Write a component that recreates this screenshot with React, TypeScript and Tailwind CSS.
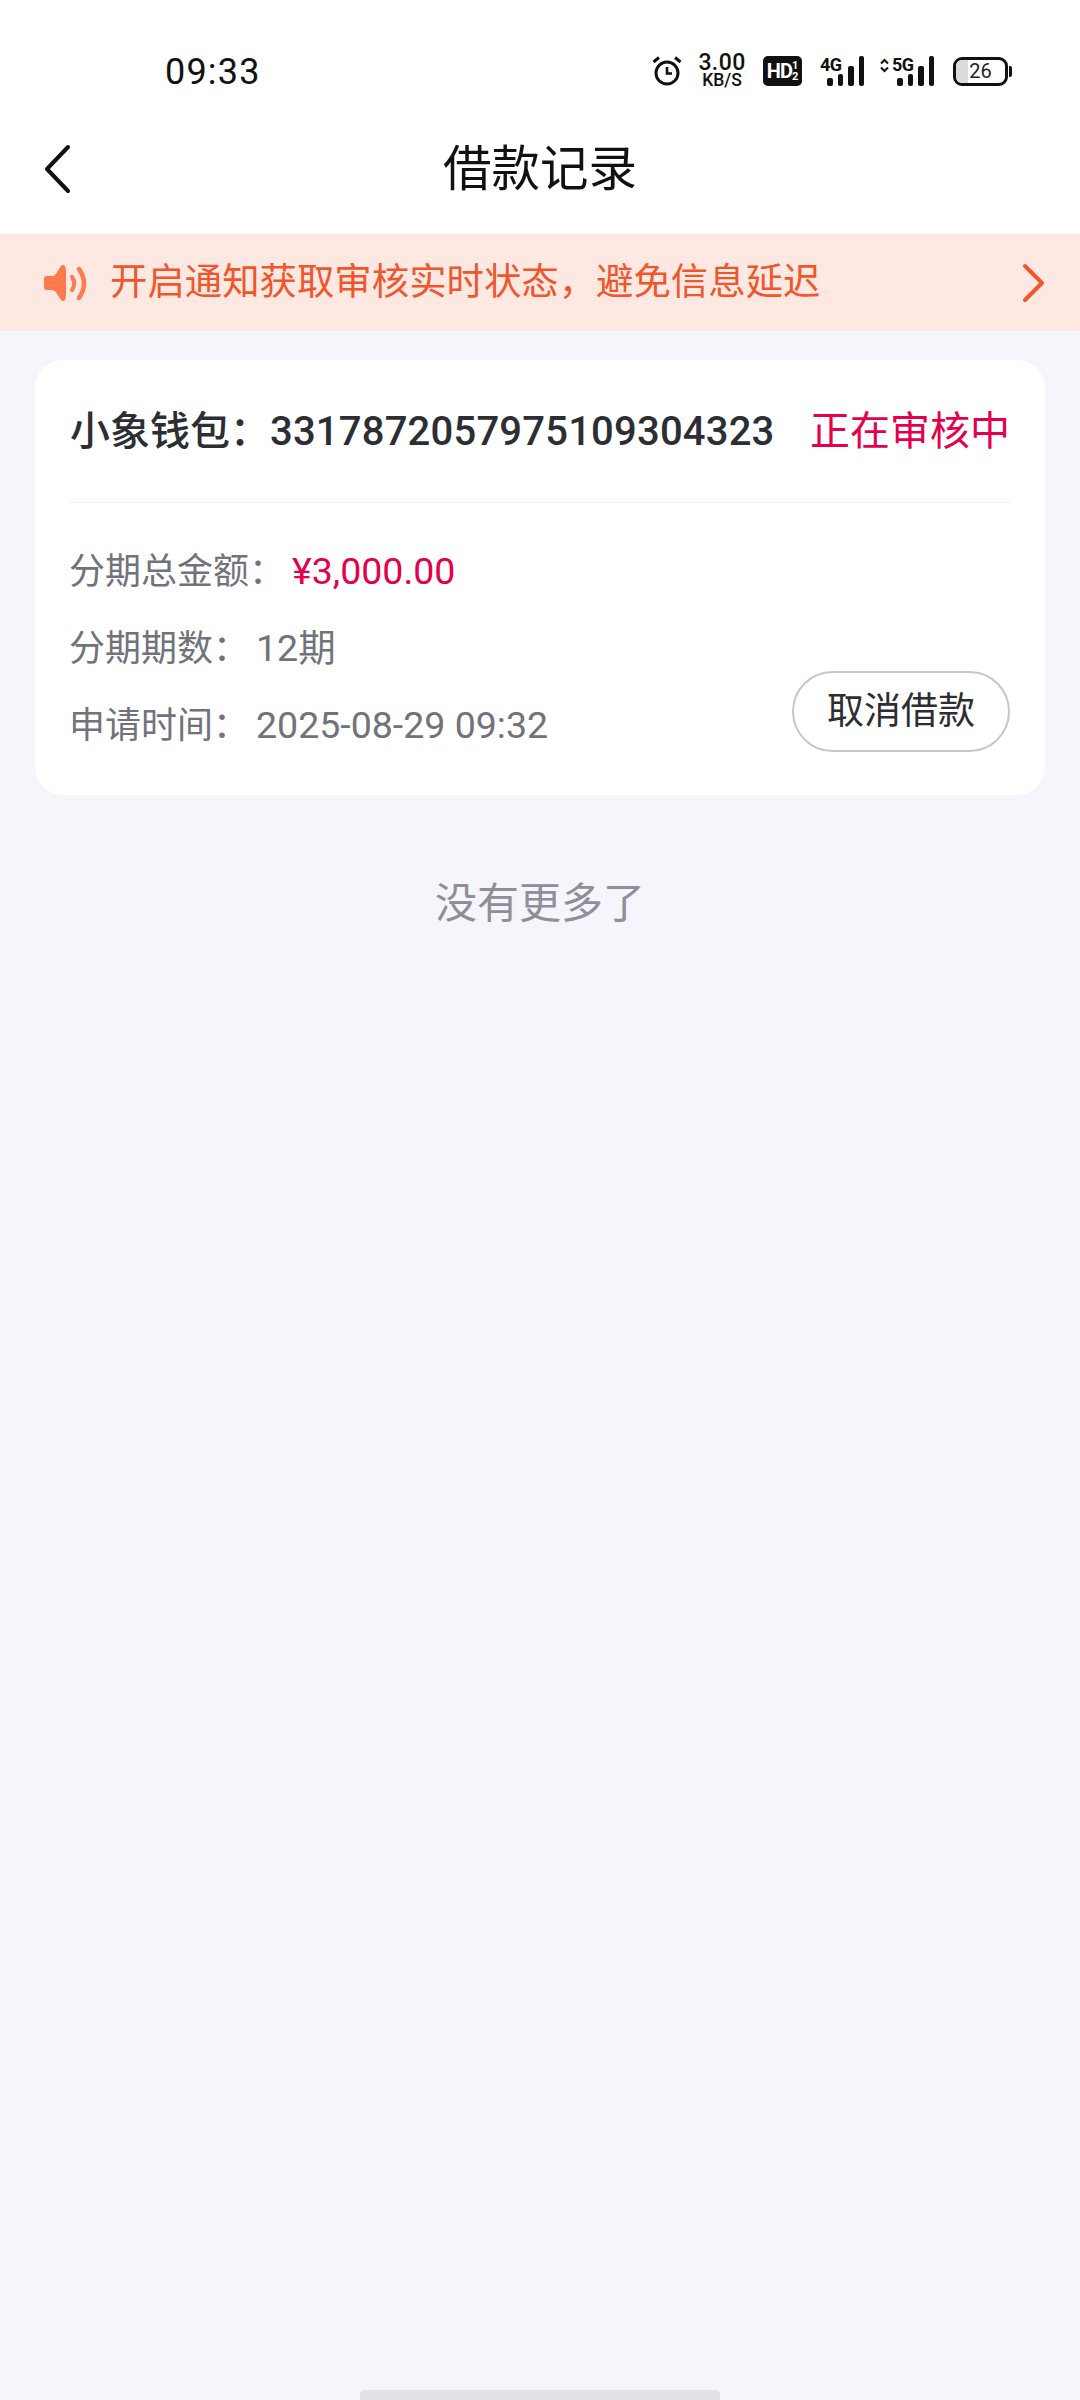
const sans = 'font-["Roboto","Noto_Sans_CJK_SC",sans-serif]';

function Signal({ label, arrows }: { label: string; arrows?: boolean }) {
  return (
    <div className={arrows ? "relative h-[30px] w-[54px]" : "relative h-[30px] w-[44px]"}>
      <div className="absolute left-0 top-0 flex items-center leading-none">
        {arrows && (
          <svg width="9" height="15" viewBox="0 0 9 15" className="mr-[3px]">
            <path d="M1 5.5 L4.5 2 L8 5.5 M1 9.5 L4.5 13 L8 9.5" fill="none" stroke="#111" strokeWidth="2" />
          </svg>
        )}
        <span className="text-[18px] font-bold tracking-[-0.5px] text-[#111]">{label}</span>
      </div>
      <div className="absolute bottom-0 right-0 flex items-end gap-[5px]">
        <i className="block h-[8px] w-[5.5px] rounded-[2px] bg-[#111]" />
        <i className="block h-[12px] w-[5.5px] rounded-[2px] bg-[#111]" />
        <i className="block h-[20px] w-[5.5px] rounded-[2px] bg-[#111]" />
        <i className="block h-[30px] w-[5.5px] rounded-[2px] bg-[#111]" />
      </div>
    </div>
  );
}

function StatusBar() {
  return (
    <div className="flex h-[108px] items-center pl-[165px] pr-[68px] pt-[34px]">
      <span className="relative top-[1px] text-[36px] leading-[42px] tracking-[1.2px] text-[#111]">09:33</span>
      <div className="ml-auto flex items-center">
        <svg width="30" height="30" viewBox="0 0 30 30" className="mr-[14px]">
          <circle cx="15" cy="17" r="11" fill="none" stroke="#111" strokeWidth="3" />
          <path d="M15 11 V17.5 H20" fill="none" stroke="#111" strokeWidth="2.6" />
          <path d="M1.5 6 L7 1.5 M28.5 6 L23 1.5" fill="none" stroke="#111" strokeWidth="3" />
        </svg>
        <div className="mr-[15px] flex w-[52px] flex-col items-center text-[#111]">
          <span className="h-[19px] text-[23px] font-medium leading-[19px] tracking-[0.4px]">3.00</span>
          <span className="h-[17px] text-[17.5px] font-medium leading-[17px]">KB/S</span>
        </div>
        <div className="mr-[18px] flex h-[30px] w-[39px] items-center justify-center rounded-[5px] bg-[#111] text-white">
          <span className="text-[20px] font-bold leading-none tracking-[-1px]">HD</span>
          <span className="flex flex-col text-[11px] font-bold leading-[11px]">
            <span>1</span>
            <span>2</span>
          </span>
        </div>
        <div className="mr-[16px]">
          <Signal label="4G" />
        </div>
        <div className="mr-[19px]">
          <Signal label="5G" arrows />
        </div>
        <div className="relative flex h-[29px] w-[55px] items-center justify-center overflow-hidden rounded-[9px] border-[3px] border-[#111]">
          <div className="absolute bottom-0 left-0 top-0 w-[12px] bg-[#dcdcdc]" />
          <span className="relative text-[20px] leading-none text-[#222]">26</span>
        </div>
        <div className="ml-[1px] h-[11px] w-[3px] rounded-r-[2px] bg-[#111]" />
      </div>
    </div>
  );
}

function Row({ label, children }: { label: string; children: React.ReactNode }) {
  return (
    <div className="flex h-[77px] items-center text-[36px] leading-none text-[#71727b]">
      <span className="ml-[-1px]">{label}</span>
      {children}
    </div>
  );
}

export default function App() {
  return (
    <div className={`flex min-h-[2400px] w-[1080px] flex-col bg-[#f5f5fb] ${sans}`}>
      <div className="bg-white">
        <StatusBar />
        <div className="relative flex h-[126px] items-center justify-center pb-[2px]">
          <svg width="30" height="50" viewBox="0 0 30 50" className="absolute left-[43px] top-[36px]">
            <path d="M25 3 L4 25 L25 47" fill="none" stroke="#111" strokeWidth="4" strokeLinecap="round" strokeLinejoin="round" />
          </svg>
          <span className="text-[48.5px] leading-none text-[#111]">借款记录</span>
        </div>
      </div>

      <div className="flex h-[97px] items-center bg-[#fde8e2] pl-[43px] pr-[34px]">
        <svg width="46" height="40" viewBox="0 0 46 40" className="mr-[21px] shrink-0">
          <path d="M4 13 H9 Q11 13 12.5 11.5 L18 3 Q20 1 22 3 Q23 5 23 8 V32 Q23 35 22 37 Q20 39 18 37 L12.5 28.5 Q11 27 9 27 H4 Q1 27 1 24 V16 Q1 13 4 13 Z" fill="#ff7a4d" />
          <path d="M29 14 Q33.5 20.5 29 27" fill="none" stroke="#ff7a4d" strokeWidth="4" strokeLinecap="round" />
          <path d="M36 6 Q46 20.5 36 35" fill="none" stroke="#ff7a4d" strokeWidth="4.5" strokeLinecap="round" />
        </svg>
        <span className="text-[37.4px] leading-none text-[#f0562c]">开启通知获取审核实时状态，避免信息延迟</span>
        <svg width="24" height="40" viewBox="0 0 24 40" className="ml-auto shrink-0">
          <path d="M3 3 L20 20 L3 37" fill="none" stroke="#f0562c" strokeWidth="4" strokeLinecap="round" strokeLinejoin="round" />
        </svg>
      </div>

      <div className="mx-[35px] mt-[29px] h-[435px] rounded-[28px] bg-white px-[35px]">
        <div className="flex h-[143px] items-center justify-between border-b border-[#eeeef2] pt-[2px]">
          <span className="text-[40px] font-medium leading-none text-[#2d2e33]">
            小象钱包：<span className="tracking-[0.2px]">3317872057975109304323</span>
          </span>
          <span className="text-[40px] leading-none text-[#e5004f]">正在审核中</span>
        </div>
        <div className="relative pt-[30px]">
          <Row label="分期总金额：">
            <span className="ml-[7px] text-[37.5px] text-[#e5004f]">¥3,000.00</span>
          </Row>
          <Row label="分期期数：">
            <span className="ml-[7px] text-[37.5px]">12期</span>
          </Row>
          <Row label="申请时间：">
            <span className="ml-[7px] text-[37.5px]">2025-08-29 09:32</span>
          </Row>
          <button className="absolute bottom-[12px] right-0 flex h-[81px] w-[218px] items-center justify-center rounded-full border-2 border-[#c6c6cf] text-[37px] text-[#2d2e33]">
            取消借款
          </button>
        </div>
      </div>

      <div className="mt-[84px] text-center text-[42px] leading-[50px] text-[#8f9097]">没有更多了</div>

      <div className="mt-auto flex justify-center">
        <div className="h-[10px] w-[360px] rounded-t-[5px] bg-[#e2e2e5]" />
      </div>
    </div>
  );
}
